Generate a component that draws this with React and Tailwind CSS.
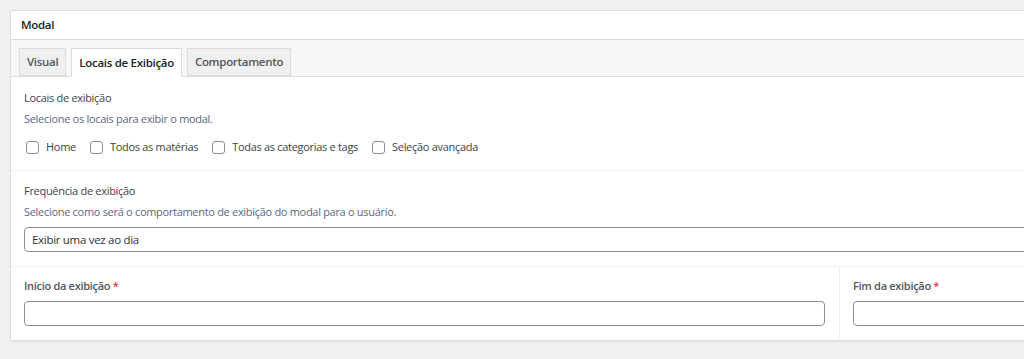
import { useState } from 'react'

const tabs = ['Visual', 'Locais de Exibição', 'Comportamento']
const places = ['Home', 'Todos as matérias', 'Todas as categorias e tags', 'Seleção avançada']

function Checkbox({ label }) {
  return (
    <label className="flex items-center gap-[7px]">
      <span className="w-[13px] h-[13px] rounded-[3px] border border-[#8c8f94] bg-white" />
      <span>{label}</span>
    </label>
  )
}

export default function App() {
  const [active, setActive] = useState(1)

  return (
    <div
      className="w-[1024px] h-[359px] overflow-hidden bg-[#f0f0f1] pt-[10px] pl-[10px] text-[#3c434a] tracking-[-0.3px]"
      style={{ fontFamily: '"Open Sans", "Noto Sans", sans-serif' }}
    >
      <div className="w-[1240px] bg-white border border-[#dcdcde] shadow-[0_1px_1px_rgba(0,0,0,0.04)]">
        <div className="h-[29px] px-[10px] flex items-center border-b border-[#dcdcde] text-[11.5px] font-semibold text-[#1d2327]">
          Modal
        </div>

        <div className="bg-[#f6f7f7] pt-[8px] px-[8px] flex gap-[5px] border-b border-[#dcdcde]">
          {tabs.map((t, i) => (
            <button
              key={t}
              onClick={() => setActive(i)}
              className={
                i === active
                  ? 'h-[29px] px-[7px] -mb-px border border-[#dcdcde] border-b-white bg-white text-[11.5px] font-semibold text-[#1d2327]'
                  : 'h-[28px] px-[7px] border border-[#dcdcde] bg-[#f0f0f1] text-[11.5px] font-semibold text-[#50575e]'
              }
            >
              {t}
            </button>
          ))}
        </div>

        <div className="px-[13px] pt-[13px] pb-[15px] border-b border-[#f0f0f1] text-[11px]">
          <div className="leading-[16px]">Locais de exibição</div>
          <div className="mt-[5px] leading-[16px] text-[#5a6785]">Selecione os locais para exibir o modal.</div>
          <div className="mt-[12px] h-[16px] flex items-center gap-[14px] pl-[2px]">
            {places.map((p) => (
              <Checkbox key={p} label={p} />
            ))}
          </div>
        </div>

        <div className="px-[13px] pt-[12px] pb-[14px] border-b border-[#f0f0f1] text-[11px]">
          <div className="leading-[16px]">Frequência de exibição</div>
          <div className="mt-[5px] leading-[16px] text-[#5a6785]">
            Selecione como será o comportamento de exibição do modal para o usuário.
          </div>
          <div className="mt-[7px] h-[25px] rounded-[4px] border border-[#8c8f94] flex items-center px-[7px] text-[11.5px] text-[#2c3338]">
            Exibir uma vez ao dia
          </div>
        </div>

        <div className="flex text-[11px]">
          <div className="w-[829px] border-r border-[#f0f0f1] pl-[13px] pr-[14px] pt-[11px] pb-[14px]">
            <div className="leading-[16px] font-semibold text-[#50575e]">
              Início da exibição <span className="text-[#d63638]">*</span>
            </div>
            <div className="mt-[7px] h-[25px] rounded-[4px] border border-[#8c8f94]" />
          </div>
          <div className="flex-1 pl-[13px] pr-[14px] pt-[11px] pb-[14px]">
            <div className="leading-[16px] font-semibold text-[#50575e]">
              Fim da exibição <span className="text-[#d63638]">*</span>
            </div>
            <div className="mt-[7px] h-[25px] rounded-[4px] border border-[#8c8f94]" />
          </div>
        </div>
      </div>
    </div>
  )
}
